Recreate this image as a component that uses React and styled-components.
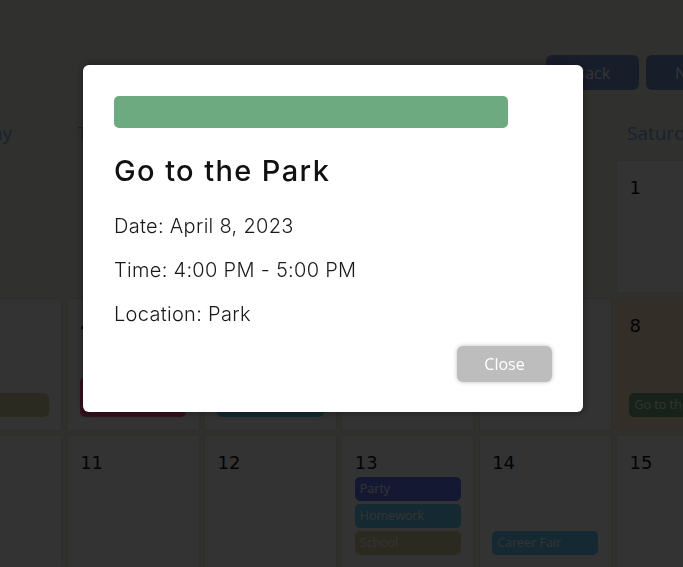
import React from 'react';
import styled, {createGlobalStyle} from 'styled-components';

const GlobalStyle = createGlobalStyle`
  html, body {
    margin: 0;
    padding: 0;
    overflow: hidden;
    background: #f0f0e8;
  }

  * {
    box-sizing: border-box;
  }
`;

const eventColors = {
  green: '#6daa80',
  navy: '#6a78ff',
  teal: '#64cdf5',
  olive: '#d7d2a0',
  maroon: '#ff5a96',
};

const Page = styled.div`
  width: 100%;
  height: 567px;
  overflow: hidden;
  font-family: "Open Sans", sans-serif;
`;

const Calendar = styled.div`
  width: 955px;
  margin-left: -207px;
  padding-top: 54.5px;
`;

const Header = styled.div`
  display: flex;
  justify-content: space-between;
  align-items: center;
  padding-right: 9px;
`;

const MonthTitle = styled.h1`
  margin: 0;
  font-size: 26px;
  font-weight: 600;
  color: #2a4a78;
`;

const NavGroup = styled.div`
  display: flex;
  gap: 7px;
`;

const NavButton = styled.button`
  width: 93px;
  height: 34.5px;
  border: none;
  border-radius: 6px;
  background: #7b93d0;
  color: #fff;
  font-family: "Open Sans", sans-serif;
  font-size: 16px;
`;

const Grid = styled.div`
  display: grid;
  grid-template-columns: repeat(7, 1fr);
  column-gap: 6.3px;
  row-gap: 6.5px;
`;

const DayNames = styled(Grid)`
  margin-top: 29.5px;
  margin-bottom: 15px;
`;

const DayName = styled.div`
  padding-left: 10px;
  font-size: 19px;
  color: #7aa8e0;
`;

const Cell = styled.div`
  height: 131px;
  padding: 16px 12.5px 12.5px;
  display: flex;
  flex-direction: column;
  background: ${({$today}) => ($today ? '#ffe6c8' : '#ffffff')};
  box-shadow: 0 0 3px rgba(0, 0, 0, 0.12);
`;

const EmptyCell = styled.div`
  height: 131px;
`;

const DateNumber = styled.div`
  font-family: "DejaVu Sans", sans-serif;
  font-size: 18px;
  color: #111;
  margin-bottom: auto;
`;

const EventList = styled.div`
  display: flex;
  flex-direction: column;
  gap: 3px;
`;

const EventPill = styled.div`
  padding: 4px 5px;
  border-radius: 5px;
  background: ${({$color}) => eventColors[$color]};
  color: #fff;
  font-size: 12.5px;
  line-height: 16px;
  white-space: ${({$wrap}) => ($wrap ? 'normal' : 'nowrap')};
  overflow: hidden;
`;

const Overlay = styled.div`
  position: fixed;
  inset: 0;
  display: flex;
  justify-content: center;
  align-items: flex-start;
  padding: 65px 17px 0 0;
  background: rgba(0, 0, 0, 0.8);
`;

const Modal = styled.div`
  width: 500px;
  padding: 31px 31px 30px;
  border-radius: 6px;
  background: #fff;
  box-shadow: 0 0 10px rgba(0, 0, 0, 0.45);
  font-family: "Inter", sans-serif;
`;

const ColorBar = styled.div`
  width: 90%;
  height: 32px;
  border-radius: 5px;
  background: ${({$color}) => eventColors[$color]};
`;

const Title = styled.h2`
  margin: 26px 0 25.4px;
  font-size: 29px;
  line-height: 1.2;
  font-weight: 500;
  letter-spacing: 1.4px;
  color: #111;
`;

const Details = styled.div`
  display: flex;
  flex-direction: column;
  gap: 20px;
`;

const Detail = styled.p`
  margin: 0;
  font-size: 20px;
  line-height: 24px;
  font-weight: 300;
  letter-spacing: 0.3px;
  color: #1a1a1a;
`;

const Footer = styled.div`
  display: flex;
  justify-content: flex-end;
  margin-top: 19.8px;
`;

const CloseButton = styled.button`
  width: 95px;
  height: 36px;
  border: none;
  border-radius: 6px;
  background: #bdbdbd;
  color: #fff;
  font-family: "Open Sans", sans-serif;
  font-size: 16px;
  box-shadow: 0 0 4px rgba(0, 0, 0, 0.25);
`;

const dayNames = ['Sunday', 'Monday', 'Tuesday', 'Wednesday', 'Thursday', 'Friday', 'Saturday'];

const weeks = [
  [null, null, null, null, null, null, {day: 1}],
  [
    {day: 2},
    {day: 3, events: [{title: 'School', color: 'olive'}]},
    {day: 4, events: [{title: 'Doctor Appointment', color: 'maroon', wrap: true}]},
    {day: 5, events: [{title: 'Study Group', color: 'teal'}]},
    {day: 6},
    {day: 7},
    {day: 8, today: true, events: [{title: 'Go to the Park', color: 'green'}]},
  ],
  [
    {day: 9},
    {day: 10},
    {day: 11},
    {day: 12},
    {day: 13, events: [
      {title: 'Party', color: 'navy'},
      {title: 'Homework', color: 'teal'},
      {title: 'School', color: 'olive'},
    ]},
    {day: 14, events: [{title: 'Career Fair', color: 'teal'}]},
    {day: 15},
  ],
  [16, 17, 18, 19, 20, 21, 22].map((day) => ({day})),
];

const selected = {
  title: 'Go to the Park',
  color: 'green',
  date: 'April 8, 2023',
  time: '4:00 PM - 5:00 PM',
  location: 'Park',
};

const DayCell = ({cell}) => {
  if (!cell) {
    return <EmptyCell />;
  }

  return (
    <Cell $today={cell.today}>
      <DateNumber>{cell.day}</DateNumber>
      {cell.events && (
        <EventList>
          {cell.events.map((event) => (
            <EventPill
              key={event.title}
              $color={event.color}
              $wrap={event.wrap}
            >
              {event.title}
            </EventPill>
          ))}
        </EventList>
      )}
    </Cell>
  );
};

const App = () => (
  <>
    <GlobalStyle />
    <Page>
      <Calendar>
        <Header>
          <MonthTitle>April 2023</MonthTitle>
          <NavGroup>
            <NavButton>Back</NavButton>
            <NavButton>Next</NavButton>
          </NavGroup>
        </Header>
        <DayNames>
          {dayNames.map((name) => <DayName key={name}>{name}</DayName>)}
        </DayNames>
        <Grid>
          {weeks.flatMap((week, w) =>
            week.map((cell, i) => <DayCell key={`${w}-${i}`} cell={cell} />)
          )}
        </Grid>
      </Calendar>
    </Page>
    <Overlay>
      <Modal>
        <ColorBar $color={selected.color} />
        <Title>{selected.title}</Title>
        <Details>
          <Detail>Date: {selected.date}</Detail>
          <Detail>Time: {selected.time}</Detail>
          <Detail>Location: {selected.location}</Detail>
        </Details>
        <Footer>
          <CloseButton>Close</CloseButton>
        </Footer>
      </Modal>
    </Overlay>
  </>
);

export default App;
